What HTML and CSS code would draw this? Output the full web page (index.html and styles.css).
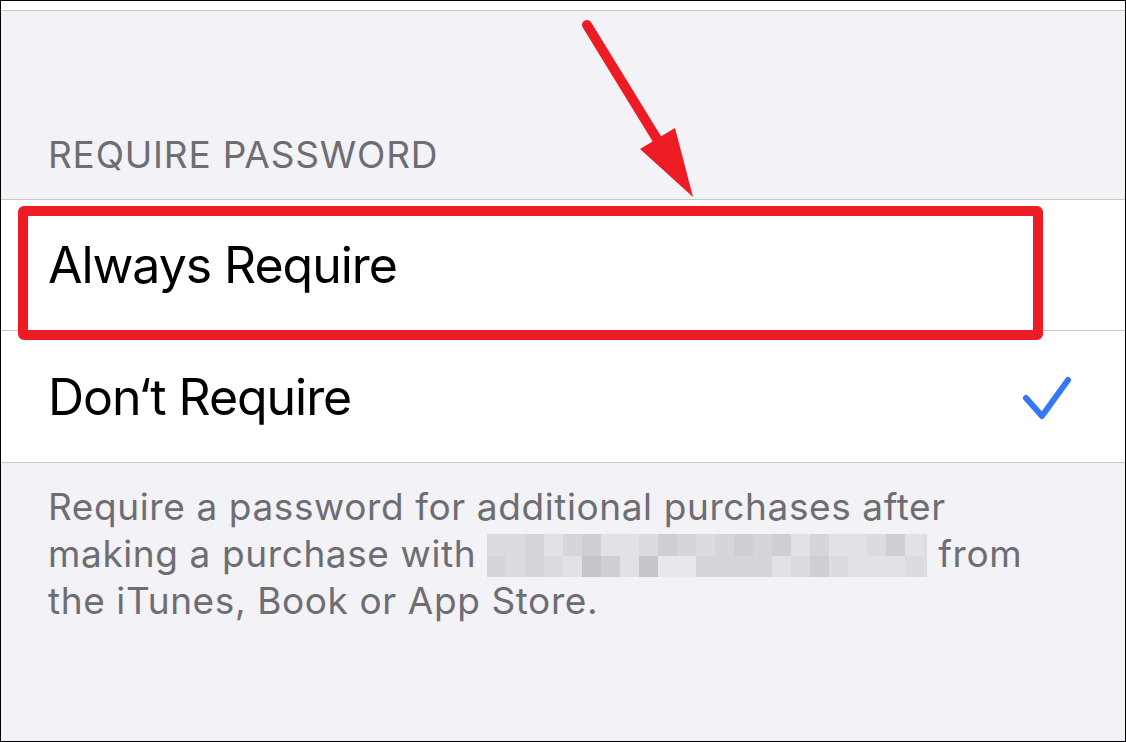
FILE: index.html
```html
<!DOCTYPE html>
<html lang="en">
<head>
  <meta charset="UTF-8" />
  <meta name="viewport" content="width=device-width, initial-scale=1.0"/>
  <title>Require Password</title>
  <link rel="stylesheet" href="styles.css">
</head>
<body>
  <div class="frame">
    <div class="topbar"></div>

    <div class="section-header">
      <p>REQUIRE PASSWORD</p>
    </div>

    <div class="list">
      <div class="row">
        <p>Always Require</p>
      </div>
      <div class="row">
        <p>Don&#8216;t Require</p>
        <svg class="check" width="50" height="46" viewBox="0 0 50 46">
          <polyline points="4,24 20,42 46,6" fill="none" stroke="#3478f6" stroke-width="6" stroke-linecap="round" stroke-linejoin="round"/>
        </svg>
      </div>
    </div>

    <div class="footer">
      <p>Require a password for additional purchases after making a purchase with <span class="blur"><i class="s2"></i><i class="s2"></i><i class="s3"></i><i class="s1"></i><i class="s3"></i><i class="s4"></i><i class="s1"></i><i class="s1"></i><i class="s2"></i><i class="s4"></i><i class="s3"></i><i class="s2"></i><i class="s3"></i><i class="s4"></i><i class="s3"></i><i class="s4"></i><i class="s1"></i><i class="s3"></i><i class="s1"></i><i class="s1"></i><i class="s2"></i><i class="s4"></i><i class="s1"></i><i class="s3"></i><i class="s2"></i><i class="s3"></i><i class="s2"></i><i class="s1"></i><i class="s5"></i><i class="s4"></i><i class="s1"></i><i class="s5"></i><i class="s0"></i><i class="s0"></i><i class="s3"></i><i class="s3"></i><i class="s3"></i><i class="s3"></i><i class="s1"></i><i class="s2"></i><i class="s4"></i><i class="s2"></i><i class="s1"></i><i class="s1"></i><i class="s1"></i><i class="s2"></i></span> from the iTunes, Book or App Store.</p>
    </div>

    <div class="highlight"></div>
    <svg class="arrow" width="120" height="190" viewBox="0 0 120 190">
      <line x1="7" y1="15" x2="88" y2="147" stroke="#ed1c24" stroke-width="10" stroke-linecap="round"/>
      <polygon points="60,139 95,118 113,187" fill="#ed1c24"/>
    </svg>
  </div>
</body>
</html>
```

FILE: styles.css
```css
* {
  margin: 0;
  padding: 0;
  box-sizing: border-box;
}

body {
  background-color: #ffffff;
  font-family: Inter, 'Noto Sans', sans-serif;
}

.frame {
  position: relative;
  display: flex;
  flex-direction: column;
  width: 1126px;
  height: 742px;
  border: 1px solid #000000;
  background-color: #f2f2f7;
  overflow: hidden;
}

.topbar {
  height: 10px;
  background-color: #ffffff;
  border-bottom: 1px solid #c8c7cc;
}

.section-header {
  display: flex;
  align-items: flex-end;
  height: 189px;
  padding: 0 0 22px 47px;
  border-bottom: 1px solid #c8c7cc;
}

.section-header p {
  font-size: 37px;
  line-height: 44px;
  color: #6d6d72;
  letter-spacing: 0.8px;
}

.list {
  background-color: #ffffff;
  border-bottom: 1px solid #c8c7cc;
}

.row {
  display: flex;
  justify-content: space-between;
  align-items: center;
  height: 131px;
  padding: 0 53px 0 47px;
}

.row:first-child {
  border-bottom: 1px solid #c8c7cc;
}

.row p {
  font-size: 50px;
  color: #000000;
  letter-spacing: -1.05px;
}

.check {
  display: block;
}

.footer {
  padding: 20px 0 0 47px;
}

.footer p {
  width: 990px;
  font-size: 37px;
  line-height: 47px;
  color: #6d6d72;
  letter-spacing: 0.6px;
}

.blur {
  display: inline-block;
  overflow: hidden;
  width: 440px;
  height: 43px;
  vertical-align: -10px;
  background-color: #dedee2;
}

.blur i {
  display: block;
  float: left;
  width: 19px;
  height: 21.5px;
}

.blur .s0 { background-color: #e8e8ec; }
.blur .s1 { background-color: #e2e2e6; }
.blur .s2 { background-color: #dcdce0; }
.blur .s3 { background-color: #d6d6da; }
.blur .s4 { background-color: #cfcfd3; }
.blur .s5 { background-color: #c6c6ca; }

.highlight {
  position: absolute;
  left: 17px;
  top: 205px;
  width: 1025px;
  height: 134px;
  border: 10px solid #ed1c24;
  border-radius: 6px;
}

.arrow {
  position: absolute;
  left: 579px;
  top: 9px;
}
```
